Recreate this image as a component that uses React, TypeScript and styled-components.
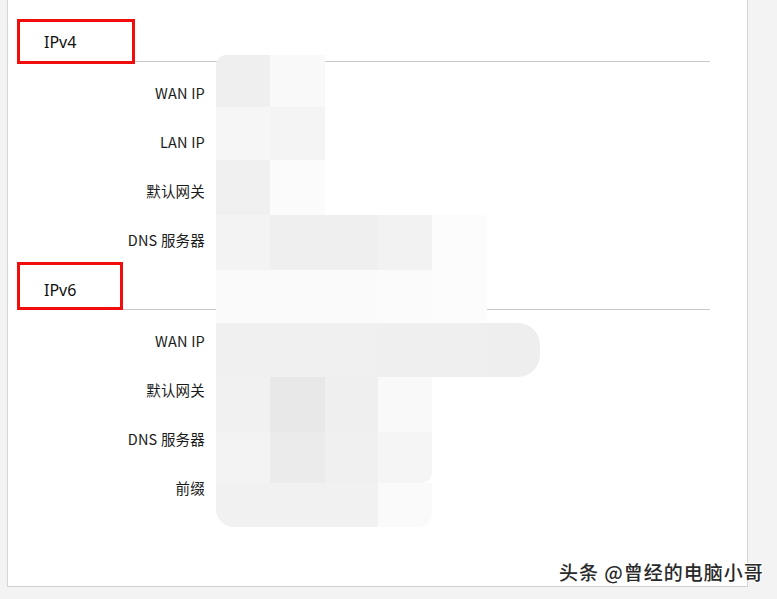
import styled, { createGlobalStyle } from 'styled-components'

const GlobalStyle = createGlobalStyle`
	html, body {
		margin: 0;
		padding: 0;
		background: #f3f3f3;
		overflow: hidden;
	}
	body {
		font-family: 'Noto Sans CJK SC', 'Noto Sans', sans-serif;
		color: #1b1b1b;
	}
`

type Fila = { etiqueta: string }

const secciones: { titulo: string; marca: { ancho: number; alto: number; arriba: number }; filas: Fila[] }[] = [
	{
		titulo: 'IPv4',
		marca: { ancho: 118, alto: 45, arriba: 3 },
		filas: [{ etiqueta: 'WAN IP' }, { etiqueta: 'LAN IP' }, { etiqueta: '默认网关' }, { etiqueta: 'DNS 服务器' }],
	},
	{
		titulo: 'IPv6',
		marca: { ancho: 106, alto: 48, arriba: -2 },
		filas: [{ etiqueta: 'WAN IP' }, { etiqueta: '默认网关' }, { etiqueta: 'DNS 服务器' }, { etiqueta: '前缀' }],
	},
]

// mosaico que tapa los valores (alto de cada fila de celdas y colores)
const altosMosaico = [52, 53, 55, 55, 53, 54, 55, 51, 44]
const anchosMosaico = [54, 55, 53, 54, 55, 53]
const coloresMosaico: (string | null)[][] = [
	['#efefef', '#f9f9f9', null, null, null, null],
	['#f6f6f6', '#f4f4f4', null, null, null, null],
	['#f0f0f0', '#fbfbfb', null, null, null, null],
	['#f3f3f3', '#efefef', '#efefef', '#f2f2f2', '#fcfcfc', null],
	['#fafafa', '#fafafa', '#fafafa', '#fbfbfb', '#fcfcfc', null],
	['#f0f0f0', '#f0f0f0', '#f0f0f0', '#efefef', '#efefef', '#eeeeee'],
	['#f1f1f1', '#e8e8e8', '#efefef', '#f9f9f9', null, null],
	['#f3f3f3', '#ebebeb', '#f0f0f0', '#f5f5f5', null, null],
	['#f1f1f1', '#f1f1f1', '#f1f1f1', '#fafafa', null, null],
]
const esquinas: Record<string, string> = {
	'0-0': '10px 0 0 0',
	'5-5': '0 22px 22px 0',
	'8-0': '0 0 0 18px',
	'8-3': '0 0 14px 0',
	'7-3': '0 0 10px 0',
}

export default function App() {
	return (
		<>
			<GlobalStyle />
			<Pagina>
				<Panel>
					{secciones.map(seccion => (
						<Seccion key={seccion.titulo}>
							<Cabecera>
								<Titulo>{seccion.titulo}</Titulo>
								<Marca $ancho={seccion.marca.ancho} $alto={seccion.marca.alto} $arriba={seccion.marca.arriba} />
							</Cabecera>
							<Filas>
								{seccion.filas.map(fila => (
									<FilaDato key={fila.etiqueta}>
										<Etiqueta>{fila.etiqueta}</Etiqueta>
									</FilaDato>
								))}
							</Filas>
						</Seccion>
					))}

					<Mosaico>
						{coloresMosaico.map((fila, r) =>
							fila.map((color, c) => (
								<Celda
									key={`${r}-${c}`}
									$color={color ?? 'transparent'}
									$radio={esquinas[`${r}-${c}`] ?? '0'}
								/>
							)),
						)}
					</Mosaico>
				</Panel>
				<MarcaAgua>头条 @曾经的电脑小哥</MarcaAgua>
			</Pagina>
		</>
	)
}

const Pagina = styled.div`
	position: relative;
	width: 777px;
	height: 599px;
	background: #f3f3f3;
	overflow: hidden;
`

const Panel = styled.div`
	position: relative;
	box-sizing: border-box;
	margin-left: 7px;
	width: 741px;
	height: 587px;
	background: #ffffff;
	border-left: 1px solid #d6d6d6;
	border-right: 1px solid #d6d6d6;
	border-bottom: 1px solid #cfcfcf;
	padding: 16px 0 0 9px;
`

const Seccion = styled.section`
	display: flex;
	flex-direction: column;
	width: 693px;
`

const Cabecera = styled.div`
	position: relative;
	display: flex;
	align-items: center;
	box-sizing: border-box;
	height: 46px;
	padding: 6px 0 0 27px;
	border-bottom: 1px solid #c9c9c9;
`

const Titulo = styled.h2`
	margin: 0;
	font-family: 'Noto Sans', 'Noto Sans CJK SC', sans-serif;
	font-size: 16px;
	font-weight: 400;
	color: #111;
`

const Marca = styled.span<{ $ancho: number; $alto: number; $arriba: number }>`
	position: absolute;
	left: 0;
	top: ${({ $arriba }) => $arriba}px;
	width: ${({ $ancho }) => $ancho}px;
	height: ${({ $alto }) => $alto}px;
	box-sizing: border-box;
	border: 3px solid #f20d0d;
`

const Filas = styled.div`
	display: flex;
	flex-direction: column;
	padding-top: 6px;
`

const FilaDato = styled.div`
	display: flex;
	align-items: center;
	height: 49px;
`

const Etiqueta = styled.span`
	width: 188px;
	text-align: right;
	font-size: 14.5px;
	letter-spacing: 0.2px;
	color: #1b1b1b;
`

const Mosaico = styled.div`
	position: absolute;
	left: 208px;
	top: 55px;
	display: grid;
	grid-template-columns: ${anchosMosaico.map(a => `${a}px`).join(' ')};
	grid-template-rows: ${altosMosaico.map(a => `${a}px`).join(' ')};
`

const Celda = styled.div<{ $color: string; $radio: string }>`
	background: ${({ $color }) => $color};
	border-radius: ${({ $radio }) => $radio};
`

const MarcaAgua = styled.div`
	position: absolute;
	left: 559px;
	top: 559px;
	font-family: 'Noto Sans CJK SC', sans-serif;
	font-size: 19px;
	font-weight: 500;
	letter-spacing: 1px;
	line-height: 26px;
	color: #2a2a2a;
	text-shadow: 1px 1px 0 #ffffff, -1px -1px 0 #ffffff, 1px -1px 0 #ffffff, -1px 1px 0 #ffffff;
	white-space: nowrap;
`
